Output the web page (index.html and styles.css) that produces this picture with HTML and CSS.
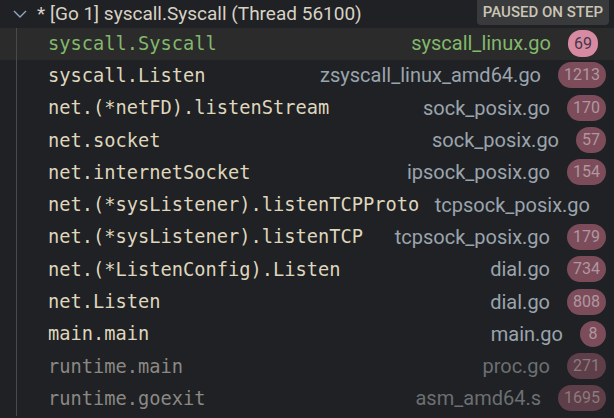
FILE: index.html
```html
<!DOCTYPE html>
<html>
<head>
<meta charset="utf-8">
<link rel="stylesheet" href="styles.css">
</head>
<body>
<div class="panel">
  <div class="header">
    <svg class="chevron" width="14" height="8" viewBox="0 0 14 8"><path d="M1 1 L7 7 L13 1" fill="none" stroke="#8ea6c2" stroke-width="1.4"/></svg>
    <span class="title">* [Go 1] syscall.Syscall (Thread 56100)</span>
    <span class="status">PAUSED ON STEP</span>
  </div>
  <div class="frames">
    <div class="row selected"><span class="fn">syscall.Syscall</span><span class="file">syscall_linux.go</span><span class="badge">69</span></div>
    <div class="row"><span class="fn">syscall.Listen</span><span class="file">zsyscall_linux_amd64.go</span><span class="badge">1213</span></div>
    <div class="row"><span class="fn">net.(*netFD).listenStream</span><span class="file">sock_posix.go</span><span class="badge">170</span></div>
    <div class="row"><span class="fn">net.socket</span><span class="file">sock_posix.go</span><span class="badge">57</span></div>
    <div class="row"><span class="fn">net.internetSocket</span><span class="file">ipsock_posix.go</span><span class="badge">154</span></div>
    <div class="row"><span class="fn">net.(*sysListener).listenTCPProto</span><span class="file">tcpsock_posix.go</span></div>
    <div class="row"><span class="fn">net.(*sysListener).listenTCP</span><span class="file">tcpsock_posix.go</span><span class="badge">179</span></div>
    <div class="row"><span class="fn">net.(*ListenConfig).Listen</span><span class="file">dial.go</span><span class="badge">734</span></div>
    <div class="row"><span class="fn">net.Listen</span><span class="file">dial.go</span><span class="badge">808</span></div>
    <div class="row"><span class="fn">main.main</span><span class="file">main.go</span><span class="badge">8</span></div>
    <div class="row dim"><span class="fn">runtime.main</span><span class="file">proc.go</span><span class="badge">271</span></div>
    <div class="row dim"><span class="fn">runtime.goexit</span><span class="file">asm_amd64.s</span><span class="badge">1695</span></div>
  </div>
</div>
</body>
</html>
```

FILE: styles.css
```css
html, body {
  margin: 0;
  padding: 0;
  background: #1f2124;
}
.panel {
  width: 614px;
  height: 418px;
  overflow: hidden;
  background: #1f2124;
  font-family: Roboto, "Noto Sans", sans-serif;
}
.header {
  height: 28px;
  display: flex;
  align-items: center;
  padding-left: 13px;
  padding-right: 5px;
}
.chevron {
  flex: none;
  margin-top: -1px;
}
.title {
  margin-left: 10px;
  flex: 1;
  color: #d8d2c4;
  font-size: 19px;
  white-space: nowrap;
  padding-bottom: 1px;
}
.status {
  align-self: flex-start;
  height: 25px;
  line-height: 25px;
  padding: 0 6px;
  background: #393a3b;
  border-radius: 0 0 4px 4px;
  color: #cbc5b6;
  font-size: 15px;
  font-weight: 500;
}
.frames {
  display: flex;
  flex-direction: column;
}
.row {
  height: 32.3px;
  box-sizing: border-box;
  display: flex;
  align-items: center;
  padding-left: 16px;
  padding-right: 8px;
}
.row.selected {
  background: #2b2b2b;
  padding-right: 16px;
}
.fn {
  flex: 1;
  min-width: 0;
  align-self: stretch;
  display: flex;
  align-items: center;
  border-left: 1px solid #4a4a4a;
  padding-left: 31px;
  padding-bottom: 2px;
  font-family: "DejaVu Sans Mono", monospace;
  font-size: 18.7px;
  color: #dfd6bd;
  white-space: nowrap;
}
.file {
  margin-right: 17px;
  margin-bottom: 2px;
  font-size: 20px;
  color: #9ba4ad;
  white-space: nowrap;
}
.row:not(:has(.badge)) .file {
  margin-right: 16px;
}
.badge {
  min-width: 26px;
  height: 26px;
  box-sizing: border-box;
  padding: 0 6px;
  margin-bottom: 2px;
  border-radius: 13px;
  background: #7c4c5b;
  color: #b0979f;
  font-size: 16px;
  line-height: 26px;
  text-align: center;
}
.selected .fn, .selected .file {
  color: #82b86c;
}
.selected .badge {
  background: #d98aa3;
  color: #433847;
  min-width: 29px;
  height: 27px;
  line-height: 27px;
}
.dim .fn {
  color: #8b8984;
}
.dim .file {
  color: #6c6f72;
}
.dim .badge {
  background: #5e3e48;
  color: #8c7a7f;
}
```
